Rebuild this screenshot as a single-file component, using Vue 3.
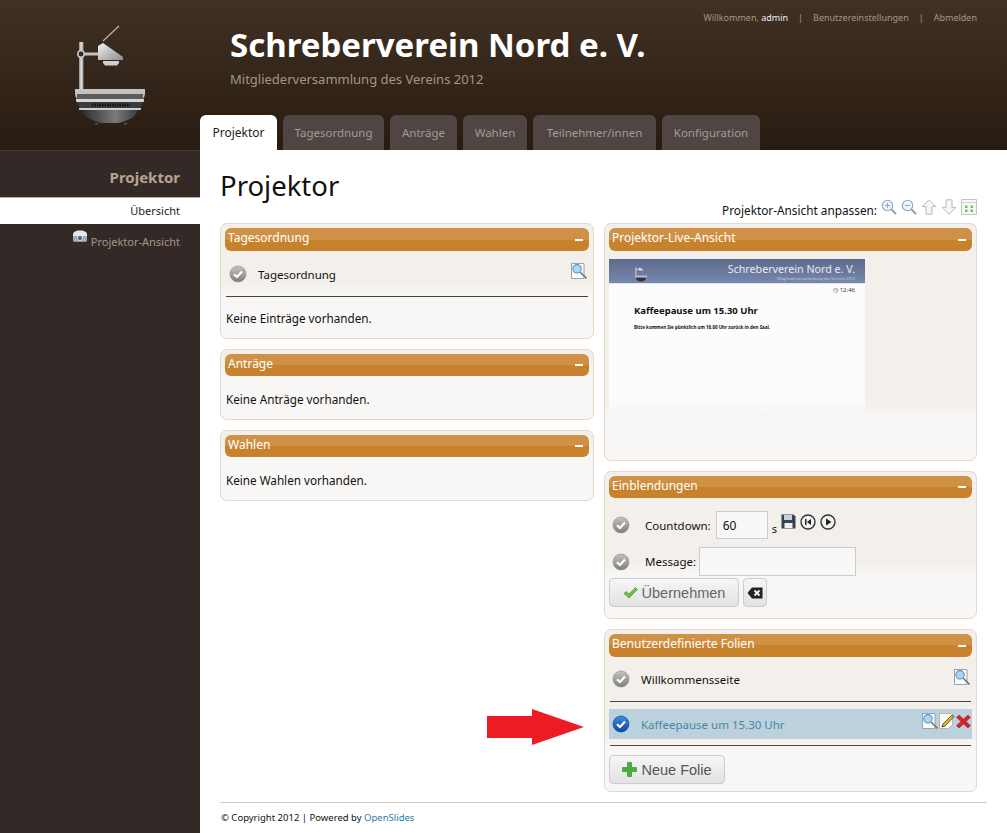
<template>
  <svg class="defs" width="0" height="0">
    <defs>
      <linearGradient id="gray-ball" x1="0" y1="0" x2="0" y2="1">
        <stop offset="0" stop-color="#c4c4c4" />
        <stop offset="1" stop-color="#7d7d7d" />
      </linearGradient>
      <linearGradient id="blue-ball" x1="0" y1="0" x2="0" y2="1">
        <stop offset="0" stop-color="#3b8fdc" />
        <stop offset="1" stop-color="#0d4a9c" />
      </linearGradient>
      <linearGradient id="metal" x1="0" y1="0" x2="1" y2="0">
        <stop offset="0" stop-color="#8c8c8c" />
        <stop offset="0.5" stop-color="#e6e6e6" />
        <stop offset="1" stop-color="#8c8c8c" />
      </linearGradient>
      <linearGradient id="bowl" x1="0" y1="0" x2="1" y2="0">
        <stop offset="0" stop-color="#2c2c2c" />
        <stop offset="0.6" stop-color="#7a7a7a" />
        <stop offset="1" stop-color="#3a3a3a" />
      </linearGradient>
      <linearGradient id="head" x1="0" y1="0" x2="1" y2="1">
        <stop offset="0" stop-color="#f2f2f2" />
        <stop offset="1" stop-color="#8d8d8d" />
      </linearGradient>
      <symbol id="ball-off" viewBox="0 0 18 18">
        <circle cx="9" cy="9" r="8" fill="url(#gray-ball)" stroke="#8b8b8b" stroke-width="0.6" />
        <path d="M5 9.2l3 2.8 5-5.4" fill="none" stroke="#fff" stroke-width="2.2" />
      </symbol>
      <symbol id="ball-on" viewBox="0 0 18 18">
        <circle cx="9" cy="9" r="8" fill="url(#blue-ball)" stroke="#0b3f86" stroke-width="0.6" />
        <path d="M5 9.2l3 2.8 5-5.4" fill="none" stroke="#fff" stroke-width="2.2" />
      </symbol>
      <symbol id="preview" viewBox="0 0 16 16">
        <path d="M.5.5h12.500v15H.5z" fill="#fbfbfb" stroke="#9aa2ab" />
        <path d="M9 9l6.500 6.500" stroke="#767676" stroke-width="1.6" />
        <circle cx="6" cy="5.800" r="4.200" fill="#a9d6f3" stroke="#5b93c4" stroke-width="1.1" />
      </symbol>
      <symbol id="zoom-in" viewBox="0 0 16 16">
        <circle cx="6.5" cy="6.5" r="5.2" fill="#eef4fb" stroke="#8aa5c5" stroke-width="1.1" />
        <path d="M10.5 10.5l4.5 4.5" stroke="#9c9c9c" stroke-width="1.8" />
        <path d="M3.8 6.5h5.4M6.5 3.8v5.4" stroke="#8aa5c5" />
      </symbol>
      <symbol id="zoom-out" viewBox="0 0 16 16">
        <circle cx="6.5" cy="6.5" r="5.2" fill="#eef4fb" stroke="#8aa5c5" stroke-width="1.1" />
        <path d="M10.5 10.5l4.5 4.5" stroke="#9c9c9c" stroke-width="1.8" />
        <path d="M3.8 6.5h5.4" stroke="#8aa5c5" />
      </symbol>
      <symbol id="up" viewBox="0 0 16 16">
        <path d="M8 .8L14.8 7.6H11V15.2H5V7.6H1.2z" fill="#f5f5f5" stroke="#b9b9b9" />
      </symbol>
      <symbol id="fit" viewBox="0 0 16 16">
        <path d="M.5.5h15v15H.5z" fill="#f7f7f7" stroke="#c4c4c4" />
        <path d="M.5 3.5h15" stroke="#d5d5d5" />
        <path d="M4 6.500h2.500V9H4zM9.500 6.500H12V9H9.500zM4 10.500h2.500V13H4zM9.500 10.500H12V13H9.500z" fill="#6cc46c" />
      </symbol>
    </defs>
  </svg>

  <div class="page">
    <header class="header">
      <div class="logo-col">
        <svg class="logo" width="90" height="120" viewBox="60 15 90 120">
          <path d="M103 41L119 26" stroke="#b5b5b5" stroke-width="1.2" />
          <rect x="79" y="42" width="4.5" height="48" fill="url(#metal)" />
          <rect x="84" y="52.5" width="16" height="3" fill="#c4c4c4" />
          <circle cx="81" cy="54" r="3.2" fill="#2a2a2a" stroke="#c9c9c9" stroke-width="1.5" />
          <path d="M98 46l5-3 20 14v3H98z" fill="url(#head)" />
          <path d="M103 61h16v2l-2 2.500h-12l-2-2.500z" fill="#cfcfcf" />
          <path d="M75 89h70v5l-1 4H76l-1-4z" fill="#c2c2c2" />
          <rect x="77" y="94" width="66" height="5" fill="#5c5c5c" />
          <path d="M76 99h68v2.500l-1 .5H77l-1-.5z" fill="#d6d6d6" />
          <path d="M77 102h66l-3 6H80z" fill="#3c3c3c" />
          <path d="M92 105h38" stroke="#111" stroke-width="3" stroke-dasharray="1.500 1" />
          <path d="M79 108h62v1.500l-1 .5H80l-1-.5z" fill="#cfcfcf" />
          <path d="M82 110h56c-2 7-10 11-20 13h-16c-10-2-18-6-20-13z" fill="url(#bowl)" />
          <path d="M95 123h3v1.500h-3zM124 123h3v1.500h-3z" fill="#555" />
        </svg>
      </div>
      <div class="head-col">
        <p class="user-links">
          <span>Willkommen, <b>admin</b></span><i>|</i><span>Benutzereinstellungen</span><i>|</i><span>Abmelden</span>
        </p>
        <h1 class="site-title">Schreberverein Nord e. V.</h1>
        <p class="site-sub">Mitgliederversammlung des Vereins 2012</p>
        <nav class="tabs">
          <a
            v-for="(tab, i) in tabs"
            :key="tab.label"
            class="tab"
            :class="{ active: i === 0 }"
            :style="{ width: tab.width + 'px' }"
          >{{ tab.label }}</a>
        </nav>
      </div>
    </header>

    <div class="body-row">
      <aside class="sidebar">
        <h3 class="side-title">Projektor</h3>
        <a class="side-item current">Übersicht</a>
        <a class="side-item">
          <svg class="side-icon" width="16" height="13" viewBox="0 0 16 13">
            <path d="M1 5c0-3 2-4.500 7-4.500S15 2 15 5v5c0 1-1 1.500-2 1.500H3C2 11.500 1 11 1 10z" fill="#e8e8e8" />
            <path d="M1 6h14v4c0 1-1 1.500-2 1.500H3C2 11.500 1 11 1 10z" fill="#a9a9a9" />
            <circle cx="8" cy="8" r="2.600" fill="#4a6a85" stroke="#eee" stroke-width="0.8" />
          </svg>
          Projektor-Ansicht
        </a>
      </aside>

      <main class="content">
        <h2 class="page-title">Projektor</h2>
        <div class="tools">
          <span>Projektor-Ansicht anpassen:</span>
          <svg class="tool" width="16" height="16"><use href="#zoom-in" /></svg>
          <svg class="tool" width="16" height="16"><use href="#zoom-out" /></svg>
          <svg class="tool" width="16" height="16"><use href="#up" /></svg>
          <svg class="tool down" width="16" height="16"><use href="#up" /></svg>
          <svg class="tool" width="16" height="16"><use href="#fit" /></svg>
        </div>

        <div class="columns">
          <div class="col">
            <section class="panel">
              <div class="bar tall"><span>Tagesordnung</span><b></b></div>
              <div class="row first-row">
                <svg class="ball" width="18" height="18"><use href="#ball-off" /></svg>
                <span class="row-label">Tagesordnung</span>
                <div class="row-icons"><svg width="16" height="16"><use href="#preview" /></svg></div>
              </div>
              <hr class="rule" />
              <p class="empty first-empty">Keine Einträge vorhanden.</p>
            </section>
            <section class="panel">
              <div class="bar"><span>Anträge</span><b></b></div>
              <p class="empty">Keine Anträge vorhanden.</p>
            </section>
            <section class="panel">
              <div class="bar"><span>Wahlen</span><b></b></div>
              <p class="empty">Keine Wahlen vorhanden.</p>
            </section>
          </div>

          <div class="col">
            <section class="panel live">
              <div class="bar tall"><span>Projektor-Live-Ansicht</span><b></b></div>
              <div class="mini">
                <div class="mini-head">
                  <svg class="mini-logo" width="14" height="18" viewBox="70 25 80 100">
                    <path d="M81 42v48M81 54h20" stroke="#ddd" stroke-width="5" />
                    <path d="M98 46l5-3 20 14v3H98z" fill="#ddd" />
                    <path d="M75 89h70v12H75z" fill="#bbb" />
                    <path d="M80 102h60c-2 10-10 20-30 21-20-1-28-11-30-21z" fill="#333" />
                  </svg>
                  <div class="mini-titles">
                    <div class="mini-name">Schreberverein Nord e. V.</div>
                    <div class="mini-sub">Mitgliederversammlung des Vereins 2012</div>
                  </div>
                </div>
                <div class="mini-clock">◷ 12:46</div>
                <div class="mini-h">Kaffeepause um 15.30 Uhr</div>
                <div class="mini-p">Bitte kommen Sie pünktlich um 16.00 Uhr zurück in den Saal.</div>
              </div>
            </section>

            <section class="panel">
              <div class="bar"><span>Einblendungen</span><b></b></div>
              <div class="form-row countdown">
                <svg class="ball" width="18" height="18"><use href="#ball-off" /></svg>
                <label>Countdown:</label>
                <input class="field short" value="60" />
                <span class="unit">s</span>
                <svg class="ctl" width="15" height="15" viewBox="0 0 15 15">
                  <path d="M.5.5h12l2 2v12H.5z" fill="#39424f" />
                  <path d="M3 1h8v5H3z" fill="#c5d3e2" />
                  <path d="M3.500 9h8v5h-8z" fill="#eef1f4" />
                </svg>
                <svg class="ctl" width="16" height="16" viewBox="0 0 16 16">
                  <circle cx="8" cy="8" r="7" fill="#f2f2f2" stroke="#333" stroke-width="1.4" />
                  <path d="M5 5h1.500v6H5zM11 5v6L7 8z" fill="#222" />
                </svg>
                <svg class="ctl" width="16" height="16" viewBox="0 0 16 16">
                  <circle cx="8" cy="8" r="7" fill="#f2f2f2" stroke="#333" stroke-width="1.4" />
                  <path d="M6 4.500v7L11.500 8z" fill="#222" />
                </svg>
              </div>
              <div class="form-row message">
                <svg class="ball" width="18" height="18"><use href="#ball-off" /></svg>
                <label>Message:</label>
                <input class="field long" />
              </div>
              <div class="buttons">
                <button class="btn apply">
                  <svg width="15" height="12" viewBox="0 0 15 12">
                    <path d="M1 6.500l2-2 3 2.500 6.500-6.500 2 2L6 11z" fill="#6cc04a" stroke="#3c8f2a" stroke-width="0.6" />
                  </svg>
                  Übernehmen
                </button>
                <button class="btn clear">
                  <svg width="16" height="12" viewBox="0 0 16 12">
                    <path d="M5 .5h10.500v11H5L.5 6z" fill="#222" />
                    <path d="M7.500 3.500l5 5M12.500 3.500l-5 5" stroke="#fff" stroke-width="1.8" />
                  </svg>
                </button>
              </div>
            </section>

            <section class="panel">
              <div class="bar tall"><span>Benutzerdefinierte Folien</span><b></b></div>
              <div class="row slide-row welcome">
                <svg class="ball" width="18" height="18"><use href="#ball-off" /></svg>
                <span class="row-label">Willkommensseite</span>
                <div class="row-icons"><svg width="16" height="16"><use href="#preview" /></svg></div>
              </div>
              <hr class="rule" />
              <div class="row slide-row active-slide">
                <svg class="ball" width="18" height="18"><use href="#ball-on" /></svg>
                <span class="row-label">Kaffeepause um 15.30 Uhr</span>
                <div class="row-icons">
                  <svg width="16" height="16"><use href="#preview" /></svg>
                  <svg width="16" height="16" viewBox="0 0 16 16">
                    <path d="M.5.5h13v11l-4 4h-9z" fill="#fbfbf2" stroke="#b5b5a8" />
                    <path d="M4 11L13 2l2 1.500-9 9.500-3 1z" fill="#e8b92a" stroke="#333" stroke-width="0.8" />
                  </svg>
                  <svg width="15" height="16" viewBox="0 0 15 16">
                    <path d="M3 2l4.500 4L12 2l2.500 2.500L10 8.500l4.500 4L12 15l-4.500-4L3 15 .5 12.500 5 8.500.5 4.500z" fill="#d4252b" stroke="#8c1a1a" stroke-width="0.5" />
                  </svg>
                </div>
              </div>
              <hr class="rule" />
              <button class="btn add">
                <svg width="15" height="15" viewBox="0 0 15 15">
                  <path d="M5.500.5h4v5h5v4h-5v5h-4v-5h-5v-4h5z" fill="#46b03a" stroke="#2b8a2b" stroke-width="0.6" />
                </svg>
                Neue Folie
              </button>
            </section>

            <svg class="arrow" width="97" height="36" viewBox="0 0 97 36">
              <path d="M0 7h45V0l52 18-52 18v-7H0z" fill="#ed1c24" />
            </svg>
          </div>
        </div>

        <footer class="footer">© Copyright 2012 | Powered by <a>OpenSlides</a></footer>
      </main>
    </div>
  </div>
</template>

<script setup>
const tabs = [
  { label: 'Projektor', width: 77 },
  { label: 'Tagesordnung', width: 101 },
  { label: 'Anträge', width: 67 },
  { label: 'Wahlen', width: 64 },
  { label: 'Teilnehmer/innen', width: 123 },
  { label: 'Konfiguration', width: 98 },
]
</script>

<style>
html,
body {
  margin: 0;
  background: #fff;
}
</style>

<style scoped>
.defs {
  position: absolute;
}
.page {
  width: 1007px;
  height: 833px;
  overflow: hidden;
  font-family: 'Noto Sans', sans-serif;
  font-size: 12px;
  color: #111;
}
.header {
  display: flex;
  height: 150px;
  background: linear-gradient(#413124, #281b11);
}
.logo-col {
  width: 200px;
  flex: none;
}
.logo {
  display: block;
  margin: 15px 0 0 60px;
}
.head-col {
  flex: 1;
  display: flex;
  flex-direction: column;
}
.user-links {
  margin: 0;
  padding: 11px 30px 0 0;
  height: 24px;
  box-sizing: border-box;
  display: flex;
  justify-content: flex-end;
  font-size: 9px;
  line-height: 13px;
  color: #a39686;
}
.user-links b {
  color: #eee;
  font-weight: 400;
}
.user-links i {
  font-style: normal;
  margin: 0 10px;
}
.site-title {
  margin: 2px 0 0 30px;
  font-size: 33px;
  line-height: 38px;
  font-weight: 700;
  color: #fff;
}
.site-sub {
  margin: 6px 0 0 30px;
  font-size: 13px;
  line-height: 18px;
  color: #a39686;
}
.tabs {
  margin-top: auto;
  display: flex;
  gap: 6px;
}
.tab {
  height: 35px;
  line-height: 35px;
  text-align: center;
  font-size: 11.5px;
  border-radius: 6px 6px 0 0;
  background: #4f4644;
  color: #a39a92;
}
.tab.active {
  background: #fff;
  color: #222;
  font-size: 12px;
}
.body-row {
  display: flex;
  height: 683px;
}
.sidebar {
  width: 200px;
  flex: none;
  background: #332a28;
  border-top: 1px solid #433a38;
  box-sizing: border-box;
}
.side-title {
  margin: 0;
  height: 47px;
  padding: 16px 20px 0 0;
  box-sizing: border-box;
  border-bottom: 1px solid #c0ab94;
  text-align: right;
  font-size: 15px;
  line-height: 20px;
  color: #b5a48f;
}
.side-item {
  display: block;
  height: 27px;
  line-height: 27px;
  padding-right: 20px;
  text-align: right;
  font-size: 11px;
  color: #a39686;
}
.side-item.current {
  height: 26px;
  line-height: 26px;
  background: #fff;
  color: #222;
  margin-bottom: 4px;
}
.side-icon {
  vertical-align: 3px;
}
.content {
  flex: 1;
  padding: 0 20px;
  min-width: 0;
}
.page-title {
  margin: 16px 0 0;
  font-size: 27.5px;
  line-height: 40px;
  font-weight: 400;
  color: #111;
}
.tools {
  height: 16px;
  display: flex;
  justify-content: flex-end;
  padding-right: 10px;
  margin-top: -7px;
  font-size: 11.8px;
  line-height: 22px;
}
.tool {
  margin-left: 4px;
}
.tool.down {
  transform: rotate(180deg);
}
.columns {
  display: grid;
  grid-template-columns: 374px 373px;
  gap: 10px;
  margin-top: 8px;
  height: 569px;
}
.col {
  display: flex;
  flex-direction: column;
  align-items: stretch;
  gap: 10px;
  position: relative;
}
.panel {
  box-sizing: border-box;
  padding: 4px;
  border: 1px solid #e6d6cb;
  border-radius: 7px;
  background: linear-gradient(to top, #f9f7f5 42px, #f3efea 58px);
}
.bar {
  height: 22px;
  padding: 0 5px 0 3px;
  display: flex;
  justify-content: space-between;
  align-items: center;
  border-radius: 6px;
  background: linear-gradient(#cf9145 50%, #c9822c 50%);
  color: #fff;
  font-size: 12px;
}
.bar.tall {
  height: 23px;
}
.bar span {
  margin-top: -4px;
}
.bar b {
  width: 8px;
  height: 2px;
  margin-right: 1px;
  background: #fff;
}
.ball {
  flex: none;
}
.row {
  display: flex;
  align-items: center;
  position: relative;
  padding-left: 3px;
}
.first-row {
  height: 45px;
  padding: 1px 0 0 4px;
  box-sizing: border-box;
}
.row-label {
  font-size: 11.5px;
  margin-left: 11px;
}
.row-icons {
  position: absolute;
  right: 2px;
  top: 12px;
  display: flex;
  gap: 1px;
}
.rule {
  margin: 0 1px;
  border: 0;
  border-top: 1px solid #444;
  height: 0;
}
.empty {
  margin: 0;
  padding: 0 1px;
  height: 39px;
  line-height: 46px;
  font-size: 11.7px;
}
.first-empty {
  height: 37px;
  line-height: 43px;
}
.live {
  height: 238px;
}
.mini {
  margin: 8px 0 0;
  width: 256px;
  height: 194px;
  background: linear-gradient(to top, #f8f6f4 38px, #fcfcfc 55px);
}
.mini-head {
  height: 25px;
  display: flex;
  justify-content: space-between;
  background: linear-gradient(#5d6b8c, #7587ad);
  border-bottom: 1px solid #dfe4ee;
  box-sizing: border-box;
  padding: 0 10px 0 25px;
}
.mini-logo {
  margin-top: 5px;
}
.mini-titles {
  text-align: right;
  color: #e8ecf3;
}
.mini-name {
  font-size: 10.7px;
  line-height: 14px;
  margin-top: 3px;
}
.mini-sub {
  font-size: 4px;
  line-height: 6px;
  color: #c6cedd;
}
.mini-clock {
  text-align: right;
  padding-right: 10px;
  font-size: 6px;
  line-height: 12px;
  color: #333;
}
.mini-h {
  margin: 8px 0 0 25px;
  font-size: 9.5px;
  line-height: 14px;
  font-weight: 700;
}
.mini-p {
  margin: 5px 0 0 25px;
  font-size: 4.5px;
  line-height: 8px;
  font-weight: 700;
}
.form-row {
  display: flex;
  align-items: center;
  padding-left: 3px;
}
.form-row label {
  font-size: 11.5px;
  margin-left: 15px;
}
.countdown {
  margin-top: 13px;
  height: 28px;
}
.message {
  margin-top: 8px;
  height: 29px;
}
.field {
  box-sizing: border-box;
  height: 100%;
  border: 1px solid #ccc;
  background: #f8f8f8;
  font-family: inherit;
  font-size: 12px;
  padding: 0 6px;
  color: #111;
  outline: 0;
}
.short {
  width: 52px;
  margin-left: 5px;
}
.long {
  width: 157px;
  margin-left: 3px;
}
.unit {
  margin: 6px 4px 0 4px;
  font-size: 11px;
}
.ctl {
  margin: -7px 4px 0 0;
}
.buttons {
  display: flex;
  gap: 4px;
  margin: 2px 0 7px;
}
.btn {
  display: flex;
  align-items: center;
  justify-content: center;
  gap: 4px;
  height: 29px;
  padding: 0;
  box-sizing: border-box;
  border: 1px solid #ccc;
  border-radius: 4px;
  background: linear-gradient(#f6f6f6, #e2e2e2);
  font-family: 'Liberation Sans', sans-serif;
  font-size: 14.5px;
  color: #666;
}
.apply {
  width: 130px;
}
.clear {
  width: 24px;
}
.add {
  width: 116px;
  margin: 9px 0 3px;
  color: #555;
}
.slide-row {
  height: 30px;
}
.welcome {
  height: 44px;
}
.active-slide {
  margin: 7px 0 6px;
  background: #bbd2de;
  color: #4a85a5;
}
.active-slide .row-icons {
  top: 4px;
  right: 1px;
}
.arrow {
  position: absolute;
  left: -117px;
  top: 486px;
}
.footer {
  border-top: 1px solid #ccc;
  margin-top: 10px;
  padding: 8px 0 0 1px;
  font-size: 9.5px;
  line-height: 14px;
}
.footer a {
  color: #2a7ab0;
}
</style>
